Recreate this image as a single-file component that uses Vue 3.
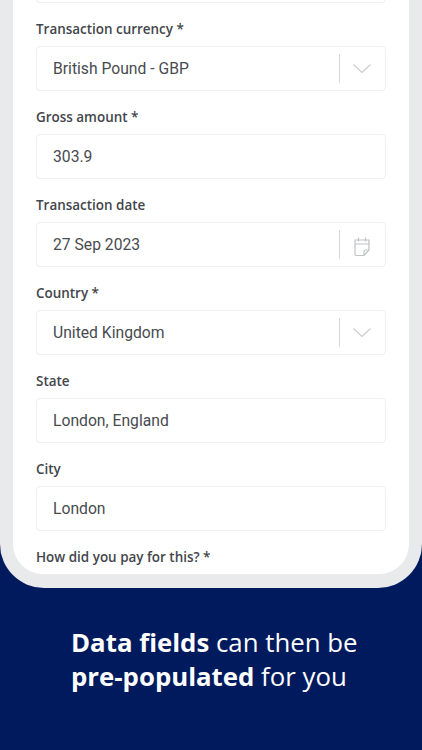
<script setup>
const fields = [
  { label: 'Transaction currency *', value: 'British Pound - GBP', icon: 'chevron' },
  { label: 'Gross amount *', value: '303.9' },
  { label: 'Transaction date', value: '27 Sep 2023', icon: 'calendar' },
  { label: 'Country *', value: 'United Kingdom', icon: 'chevron' },
  { label: 'State', value: 'London, England' },
  { label: 'City', value: 'London' },
]
</script>

<template>
  <div class="page">
    <div class="frame">
      <div class="screen">
        <div class="box first"></div>
        <div v-for="f in fields" :key="f.label" class="field">
          <div class="label">{{ f.label }}</div>
          <div class="box">
            <span class="value">{{ f.value }}</span>
            <span v-if="f.icon" class="divider"></span>
            <svg v-if="f.icon === 'chevron'" class="icon" viewBox="0 0 24 24" fill="none" stroke="#c9cbce" stroke-width="1.1">
              <path d="M3.500 7.500 12 15.500l8.500-8" />
            </svg>
            <svg v-if="f.icon === 'calendar'" class="icon" viewBox="0 0 24 24" fill="none" stroke="#bfc1c4" stroke-width="1.2">
              <path d="M5 7h14v10l-5 5.500H6.500A1.500 1.500 0 0 1 5 21z" />
              <path d="M5 11h14M8.500 4.500V8.500M15.500 4.500V8.500M19 17h-3.500a1.500 1.500 0 0 0-1.500 1.500v4" />
            </svg>
          </div>
        </div>
        <div class="field">
          <div class="label">How did you pay for this? *</div>
          <div class="box"></div>
        </div>
      </div>
    </div>
    <div class="caption">
      <p><strong>Data fields</strong> can then be</p>
      <p><strong>pre-populated</strong> for you</p>
    </div>
  </div>
</template>

<style scoped>
.page {
  width: 422px;
  height: 750px;
  overflow: hidden;
  background: #001a5e;
  font-family: "Open Sans", "Noto Sans", sans-serif;
}
.frame {
  height: 588px;
  padding: 0 13px 14px;
  box-sizing: border-box;
  background: #e9eaec;
  border-radius: 0 0 44px 44px;
}
.screen {
  height: 100%;
  padding: 0 23px;
  box-sizing: border-box;
  overflow: hidden;
  background: #fff;
  border-radius: 0 0 30px 30px;
}
.first {
  margin-top: -42px;
}
.field {
  padding-top: 16px;
}
.label {
  height: 20px;
  margin-bottom: 7px;
  color: #43464b;
  font-size: 13.45px;
  font-weight: 600;
  line-height: 21px;
}
.box {
  display: flex;
  align-items: center;
  height: 45px;
  padding: 0 11px 0 16px;
  box-sizing: border-box;
  border: 1px solid #eeefef;
  border-radius: 4px;
  background: #fff;
}
.value {
  flex: 1;
  color: #484b4f;
  font-family: Roboto, Inter, sans-serif;
  font-size: 15.7px;
}
.divider {
  width: 1px;
  height: 29px;
  margin-right: 10px;
  background: #d4d6d8;
}
.icon {
  width: 24px;
  height: 24px;
}
.caption {
  padding: 37px 0 0 71px;
  color: #fff;
  font-size: 25.8px;
  font-weight: 400;
  line-height: 34px;
}
.caption p {
  margin: 0;
}
.caption strong {
  font-weight: 700;
}
</style>
